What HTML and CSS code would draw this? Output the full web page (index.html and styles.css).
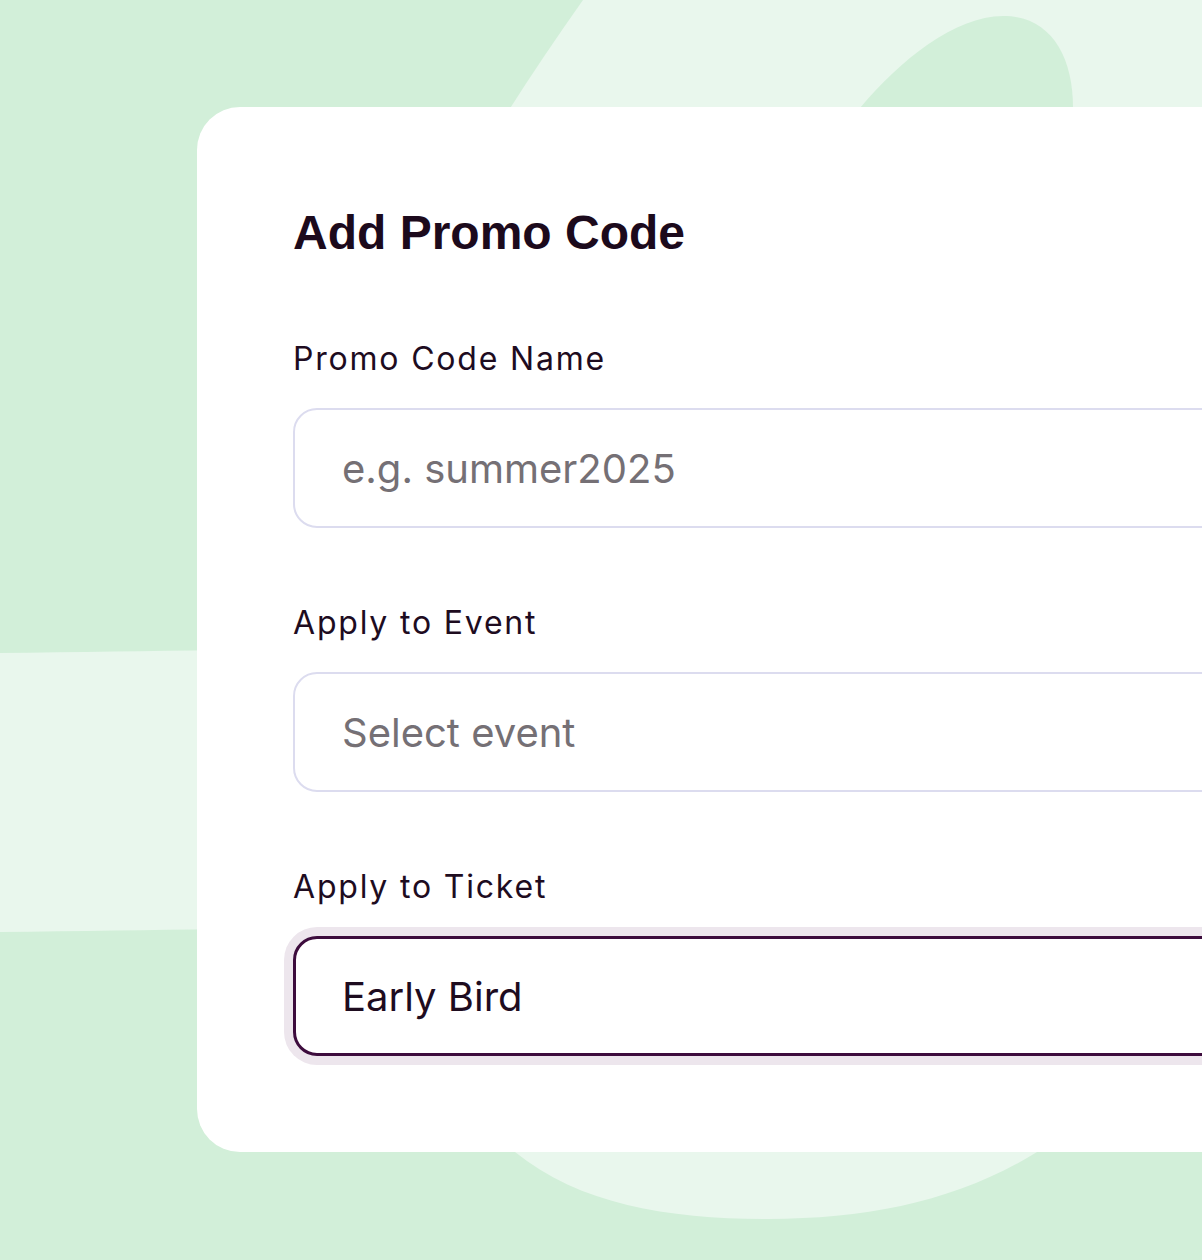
FILE: index.html
```html
<!DOCTYPE html>
<html lang="en">
<head>
<meta charset="utf-8">
<title>Add Promo Code</title>
<link rel="stylesheet" href="styles.css">
</head>
<body>
<div class="stage">
  <svg class="bg" width="1202" height="1260" viewBox="0 0 1202 1260" aria-hidden="true">
    <rect x="0" y="0" width="1202" height="1260" fill="#d2efd9"/>
    <path d="M583,0 L1202,0 L1202,300 L400,300 Q 470,160 583,0 Z" fill="#e9f7ed"/>
    <path d="M860,108 C900,60 955,16 1003,16 C1050,16 1073,55 1073,108 Z" fill="#d2efd9"/>
    <path d="M0,653 C80,652 150,651 220,650 L220,929 C150,930 80,931 0,932 Z" fill="#e9f7ed"/>
    <path d="M470,1100 L515,1152 C580,1205 670,1219 768,1219 C870,1219 960,1200 1037,1152 L1100,1100 Z" fill="#e9f7ed"/>
  </svg>
  <div class="card">
    <h1 class="title">Add Promo Code</h1>
    <div class="field">
      <label class="label" for="code">Promo Code Name</label>
      <input class="input" id="code" type="text" placeholder="e.g. summer2025">
    </div>
    <div class="field">
      <label class="label" for="event">Apply to Event</label>
      <input class="input" id="event" type="text" placeholder="Select event">
    </div>
    <div class="field">
      <label class="label" for="ticket">Apply to Ticket</label>
      <input class="input input--focus" id="ticket" type="text" value="Early Bird">
    </div>
  </div>
</div>
</body>
</html>
```
FILE: styles.css
```css
* { box-sizing: border-box; }
html, body { margin: 0; padding: 0; }
body { background: #d2efd9; overflow: hidden; }
.stage {
  position: relative;
  width: 1202px;
  height: 1260px;
  overflow: hidden;
  padding: 107px 0 0 197px;
}
.bg { position: absolute; left: 0; top: 0; }
.card {
  position: relative;
  width: 1100px;
  height: 1045px;
  background: #ffffff;
  border-radius: 43px;
  padding: 98px 0 0 96px;
}
.title {
  margin: 0;
  font-family: "Liberation Sans", Arial, sans-serif;
  font-weight: 700;
  font-size: 48px;
  line-height: 56px;
  color: #1c0a1c;
}
.field {
  display: flex;
  flex-direction: column;
  margin-top: 80px;
}
.field + .field { margin-top: 77px; }
.label {
  font-family: Inter, "Liberation Sans", sans-serif;
  font-size: 32px;
  line-height: 36px;
  letter-spacing: 1.8px;
  color: #1e0c1f;
  margin-bottom: 31px;
}
.input {
  display: block;
  width: 960px;
  height: 120px;
  border: 2px solid #dcdcef;
  border-radius: 24px;
  padding: 0 0 0 47px;
  background: #fff;
  font-family: Inter, "Liberation Sans", sans-serif;
  font-size: 40px;
  color: #1e0c1f;
  outline: none;
}
.input::placeholder { color: #757075; opacity: 1; }
.input--focus {
  border: 3px solid #3d0c3d;
  padding-left: 46px;
  box-shadow: 0 0 0 9px #ede6ed;
}
```
